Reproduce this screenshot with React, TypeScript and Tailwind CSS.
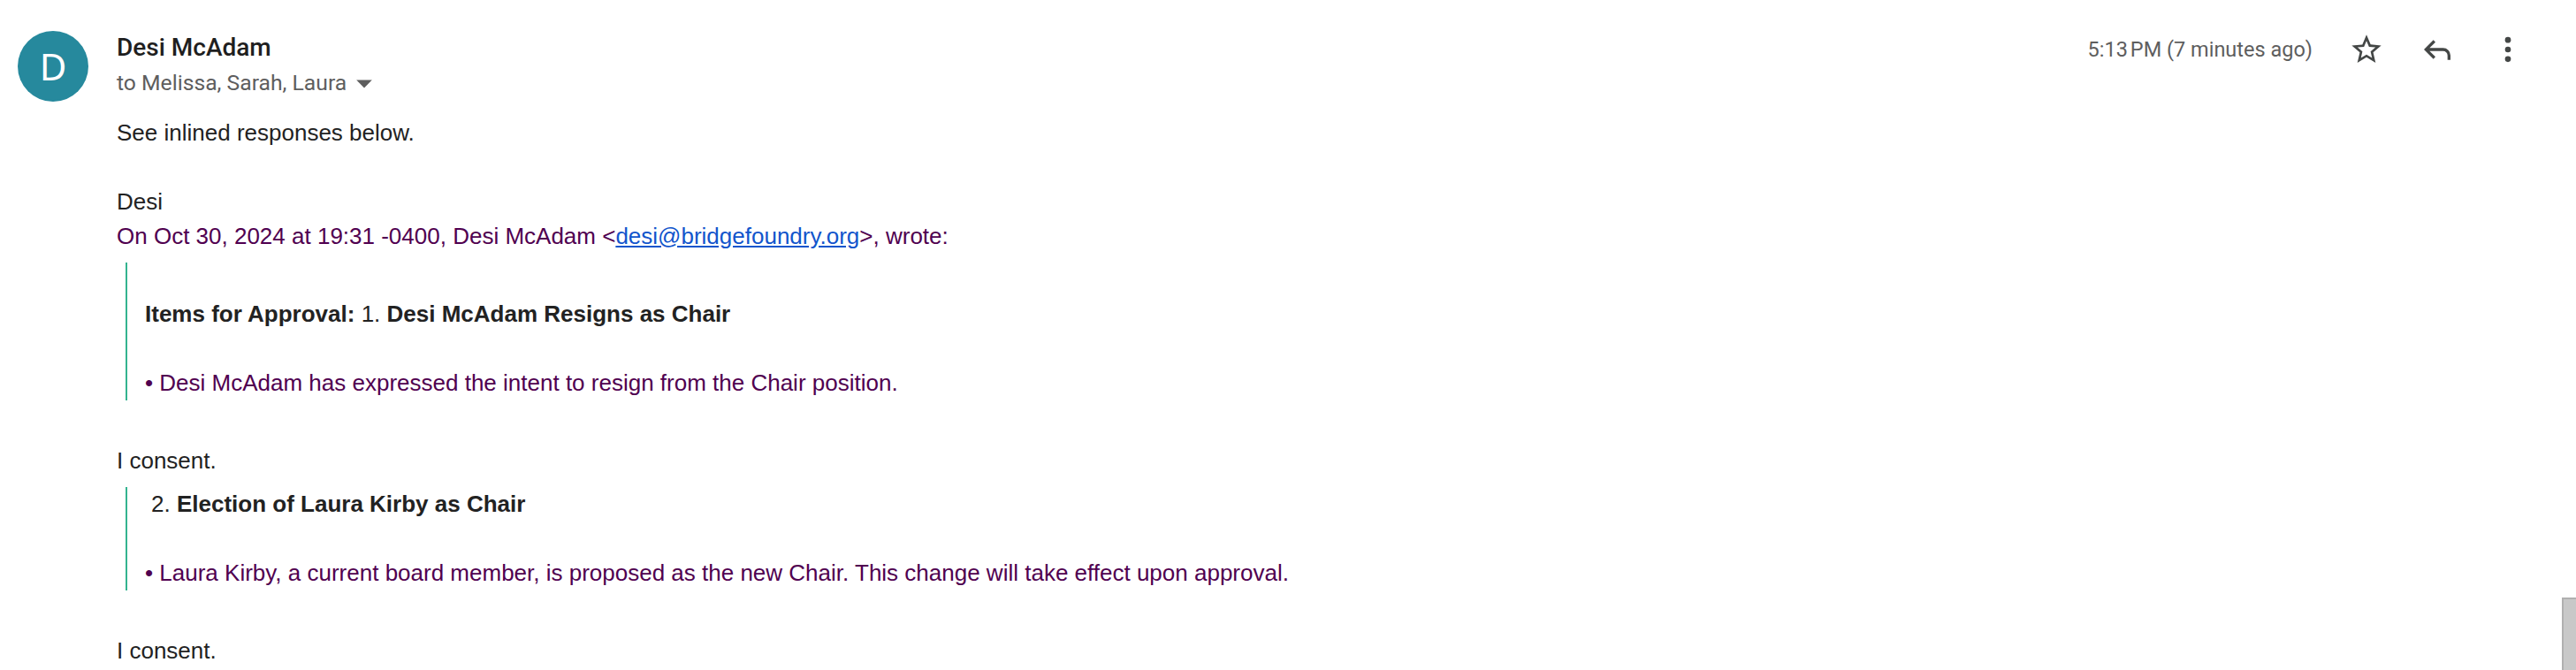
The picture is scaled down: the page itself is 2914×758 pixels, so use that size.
export default function App() {
  return (
    <div className="relative h-[758px] w-full overflow-hidden bg-white font-['Liberation_Sans',Arial,sans-serif] text-[26px] leading-[39px] text-[#222222]">
      <div className="flex pl-5 pt-[35px]">
        <div className="mr-8 flex h-20 w-20 shrink-0 items-center justify-center rounded-full bg-[#26899d] font-['Noto_Sans',sans-serif] text-[42px] leading-none text-white">
          D
        </div>
        <div className="min-w-0 flex-1">
          <MessageHeader />
          <MessageBody />
        </div>
      </div>
      <div className="absolute bottom-0 right-0 h-[82px] w-4 border-l-2 border-t-2 border-[#b0b0b0] bg-[#c8c8c8]" />
    </div>
  );
}

function MessageHeader() {
  return (
    <div className="flex h-[95.5px] items-start justify-between font-['Roboto',sans-serif]">
      <div>
        <div className="-mt-[3px] text-[28px] font-medium leading-11 text-[#1f1f1f]">Desi McAdam</div>
        <div className="flex items-center text-[24.7px] leading-9 text-[#5e5e5e]">
          to Melissa, Sarah, Laura
          <svg viewBox="0 0 20 20" className="ml-[9px] mt-[2px] h-[22px] w-[22px] fill-[#5e5e5e]">
            <path d="M2 6h16l-8 8z" />
          </svg>
        </div>
      </div>
      <div className="-mt-[19px] mr-[37px] flex items-center text-[23.5px] leading-9 text-[#5e5e5e]">
        <span className="mr-[21px]">5:13&#8239;PM (7 minutes ago)</span>
        <IconButton>
          <path d="M22 9.24l-7.19-.62L12 2 9.19 8.63 2 9.24l5.46 4.73L5.82 21 12 17.27 18.18 21l-1.63-7.03L22 9.24zM12 15.4l-3.76 2.27 1-4.28-3.32-2.88 4.38-.38L12 6.1l1.71 4.04 4.38.38-3.32 2.88 1 4.28L12 15.4z" />
        </IconButton>
        <IconButton>
          <path d="M9.4 5.6 3 12l6.4 6.4 1.4-1.4-4-4H16a3 3 0 0 1 3 3v3h2v-3a5 5 0 0 0-5-5H6.8l4-4z" />
        </IconButton>
        <IconButton>
          <circle cx="12" cy="5.5" r="2" />
          <circle cx="12" cy="12" r="2" />
          <circle cx="12" cy="18.5" r="2" />
        </IconButton>
      </div>
    </div>
  );
}

function IconButton({ children }: { children: React.ReactNode }) {
  return (
    <div className="flex h-20 w-20 items-center justify-center">
      <svg viewBox="0 0 24 24" className="h-10 w-10 fill-[#444746]">
        {children}
      </svg>
    </div>
  );
}

function QuoteBlock({ children, className }: { children: React.ReactNode; className: string }) {
  return <div className={`ml-[10px] border-l-2 border-[#33b38f] pl-5 text-[#500050] ${className}`}>{children}</div>;
}

function MessageBody() {
  return (
    <div>
      <div>See inlined responses below.</div>
      <br />
      <div>Desi</div>
      <div className="text-[#500050]">
        On Oct 30, 2024 at 19:31 -0400, Desi McAdam &lt;
        <a className="text-[#1155cc] underline">desi@bridgefoundry.org</a>
        &gt;, wrote:
      </div>
      <QuoteBlock className="mb-[49px] mt-[10px]">
        <br />
        <div className="text-[#222222]">
          <b>Items for Approval:</b> 1. <b>Desi McAdam Resigns as Chair</b>
        </div>
        <br />
        <div>• Desi McAdam has expressed the intent to resign from the Chair position.</div>
      </QuoteBlock>
      <div>I consent.</div>
      <QuoteBlock className="mb-[49px] mt-[10px]">
        <div className="pl-[7px] text-[#222222]">
          2. <b>Election of Laura Kirby as Chair</b>
        </div>
        <br />
        <div>• Laura Kirby, a current board member, is proposed as the new Chair. This change will take effect upon approval.</div>
      </QuoteBlock>
      <div>I consent.</div>
    </div>
  );
}
